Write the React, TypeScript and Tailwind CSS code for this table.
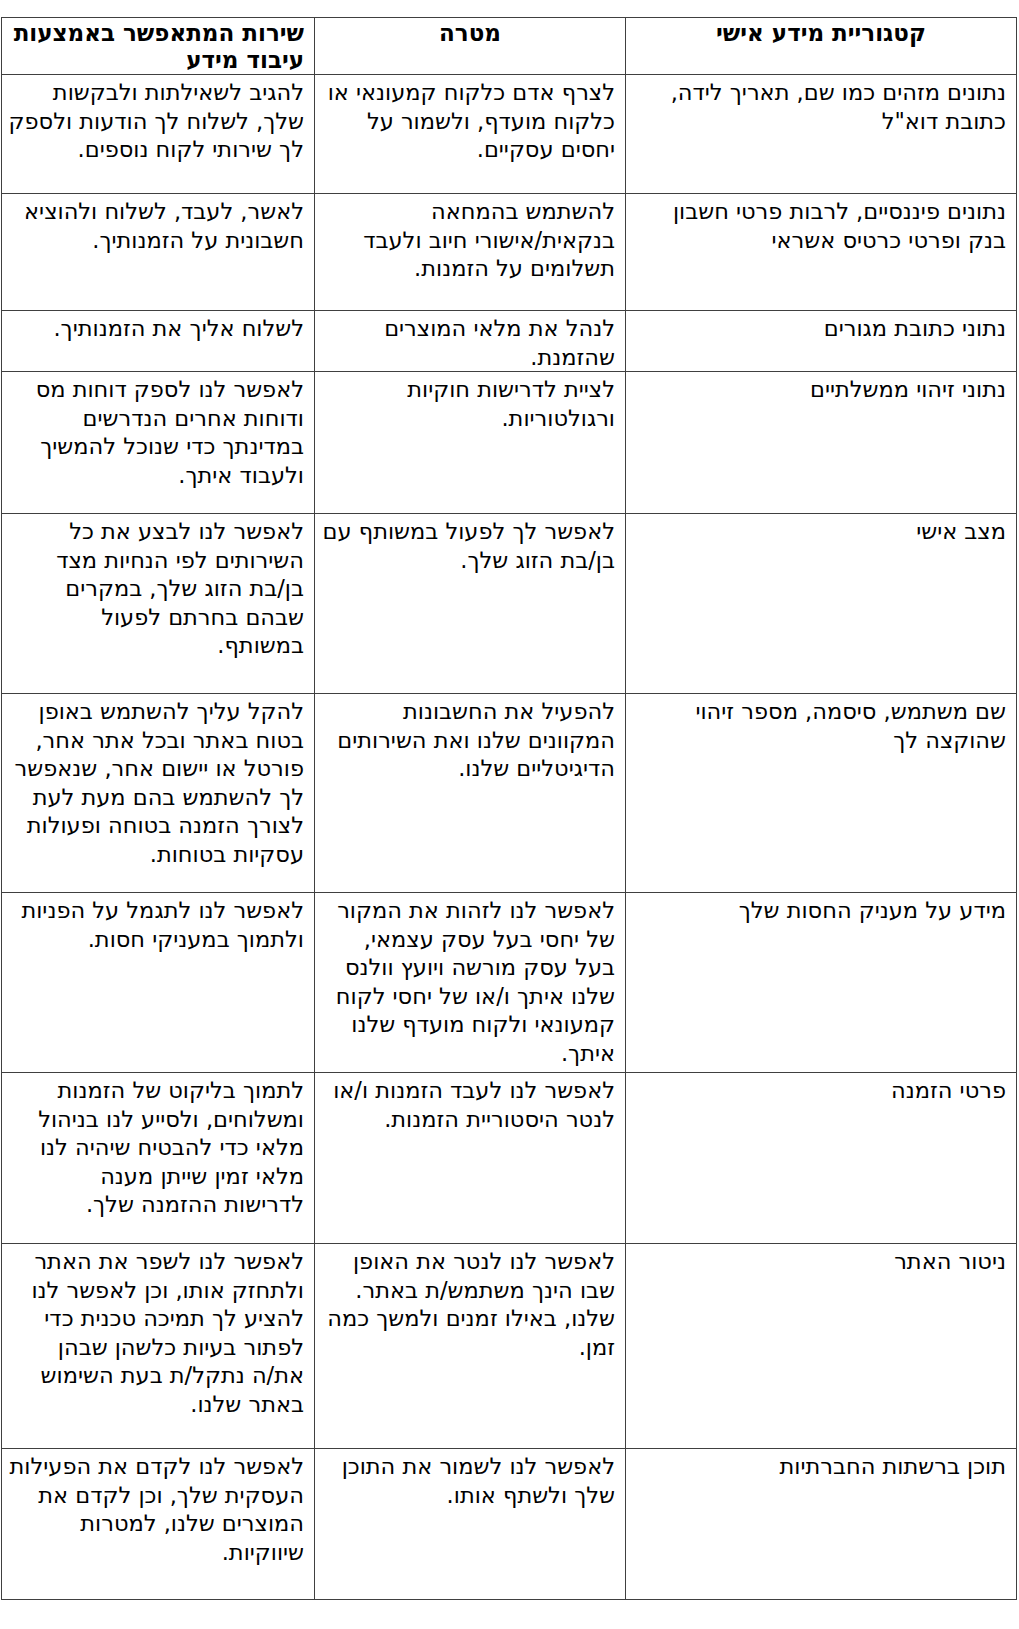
const header = ['קטגוריית מידע אישי', 'מטרה', 'שירות המתאפשר באמצעות עיבוד מידע'];

type Row = { h: string; cells: string[][] };

const rows: Row[] = [
  {
    h: 'h-[119px]',
    cells: [
      ['נתונים מזהים כמו שם, תאריך לידה,', 'כתובת דוא"ל'],
      ['לצרף אדם כלקוח קמעונאי או', 'כלקוח מועדף, ולשמור על', 'יחסים עסקיים.'],
      ['להגיב לשאילתות ולבקשות', 'שלך, לשלוח לך הודעות ולספק', 'לך שירותי לקוח נוספים.'],
    ],
  },
  {
    h: 'h-[117px]',
    cells: [
      ['נתונים פיננסיים, לרבות פרטי חשבון', 'בנק ופרטי כרטיס אשראי'],
      ['להשתמש בהמחאה', 'בנקאית/אישורי חיוב ולעבד', 'תשלומים על הזמנות.'],
      ['לאשר, לעבד, לשלוח ולהוציא', 'חשבונית על הזמנותיך.'],
    ],
  },
  {
    h: 'h-[59px]',
    cells: [
      ['נתוני כתובת מגורים'],
      ['לנהל את מלאי המוצרים', 'שהזמנת.'],
      ['לשלוח אליך את הזמנותיך.'],
    ],
  },
  {
    h: 'h-[142px]',
    cells: [
      ['נתוני זיהוי ממשלתיים'],
      ['לציית לדרישות חוקיות', 'ורגולטוריות.'],
      ['לאפשר לנו לספק דוחות מס', 'ודוחות אחרים הנדרשים', 'במדינתך כדי שנוכל להמשיך', 'ולעבוד איתך.'],
    ],
  },
  {
    h: 'h-[180px]',
    cells: [
      ['מצב אישי'],
      ['לאפשר לך לפעול במשותף עם', 'בן/בת הזוג שלך.'],
      ['לאפשר לנו לבצע את כל', 'השירותים לפי הנחיות מצד', 'בן/בת הזוג שלך, במקרים', 'שבהם בחרתם לפעול', 'במשותף.'],
    ],
  },
  {
    h: 'h-[199px]',
    cells: [
      ['שם משתמש, סיסמה, מספר זיהוי', 'שהוקצה לך'],
      ['להפעיל את החשבונות', 'המקוונים שלנו ואת השירותים', 'הדיגיטליים שלנו.'],
      [
        'להקל עליך להשתמש באופן',
        'בטוח באתר ובכל אתר אחר,',
        'פורטל או יישום אחר, שנאפשר',
        'לך להשתמש בהם מעת לעת',
        'לצורך הזמנה בטוחה ופעולות',
        'עסקיות בטוחות.',
      ],
    ],
  },
  {
    h: 'h-[180px]',
    cells: [
      ['מידע על מעניק החסות שלך'],
      [
        'לאפשר לנו לזהות את המקור',
        'של יחסי בעל עסק עצמאי,',
        'בעל עסק מורשה ויועץ וולנס',
        'שלנו איתך ו/או של יחסי לקוח',
        'קמעונאי ולקוח מועדף שלנו',
        'איתך.',
      ],
      ['לאפשר לנו לתגמל על הפניות', 'ולתמוך במעניקי חסות.'],
    ],
  },
  {
    h: 'h-[171px]',
    cells: [
      ['פרטי הזמנה'],
      ['לאפשר לנו לעבד הזמנות ו/או', 'לנטר היסטוריית הזמנות.'],
      ['לתמוך בליקוט של הזמנות', 'ומשלוחים, ולסייע לנו בניהול', 'מלאי כדי להבטיח שיהיה לנו', 'מלאי זמין שייתן מענה', 'לדרישות ההזמנה שלך.'],
    ],
  },
  {
    h: 'h-[205px]',
    cells: [
      ['ניטור האתר'],
      ['לאפשר לנו לנטר את האופן', 'שבו הינך משתמש/ת באתר.', 'שלנו, באילו זמנים ולמשך כמה', 'זמן.'],
      [
        'לאפשר לנו לשפר את האתר',
        'ולתחזק אותו, וכן לאפשר לנו',
        'להציע לך תמיכה טכנית כדי',
        'לפתור בעיות כלשהן שבהן',
        'את/ה נתקל/ת בעת השימוש',
        'באתר שלנו.',
      ],
    ],
  },
  {
    h: 'h-[151px]',
    cells: [
      ['תוכן ברשתות החברתיות'],
      ['לאפשר לנו לשמור את התוכן', 'שלך ולשתף אותו.'],
      ['לאפשר לנו לקדם את הפעילות', 'העסקית שלך, וכן לקדם את', 'המוצרים שלנו, למטרות', 'שיווקיות.'],
    ],
  },
];

export default function App() {
  return (
    <div className="min-h-[1629px] bg-white pt-[17px] pl-px pr-[2px] font-['DejaVu_Sans',sans-serif] text-[22.5px] leading-[28.5px] text-black">
      <table dir="rtl" className="w-full table-fixed border-collapse border border-[#404040]">
        <colgroup>
          <col className="w-[391px]" />
          <col className="w-[311px]" />
          <col />
        </colgroup>
        <thead>
          <tr className="h-[57px] align-top">
            {header.map((t, i) => (
              <th
                key={t}
                className={
                  'border border-[#404040] px-[10px] pt-[2px] text-[23px] leading-[27px] font-bold ' +
                  (i === 2 ? 'text-right' : 'text-center')
                }
              >
                {t}
              </th>
            ))}
          </tr>
        </thead>
        <tbody>
          {rows.map((row, r) => (
            <tr key={r} className={row.h + ' align-top'}>
              {row.cells.map((lines, c) => (
                <td key={c} className="border border-[#404040] px-[10px] pt-[3px] text-right">
                  {lines.map((l, k) => (
                    <div key={k} className="whitespace-nowrap">
                      {l}
                    </div>
                  ))}
                </td>
              ))}
            </tr>
          ))}
        </tbody>
      </table>
    </div>
  );
}
